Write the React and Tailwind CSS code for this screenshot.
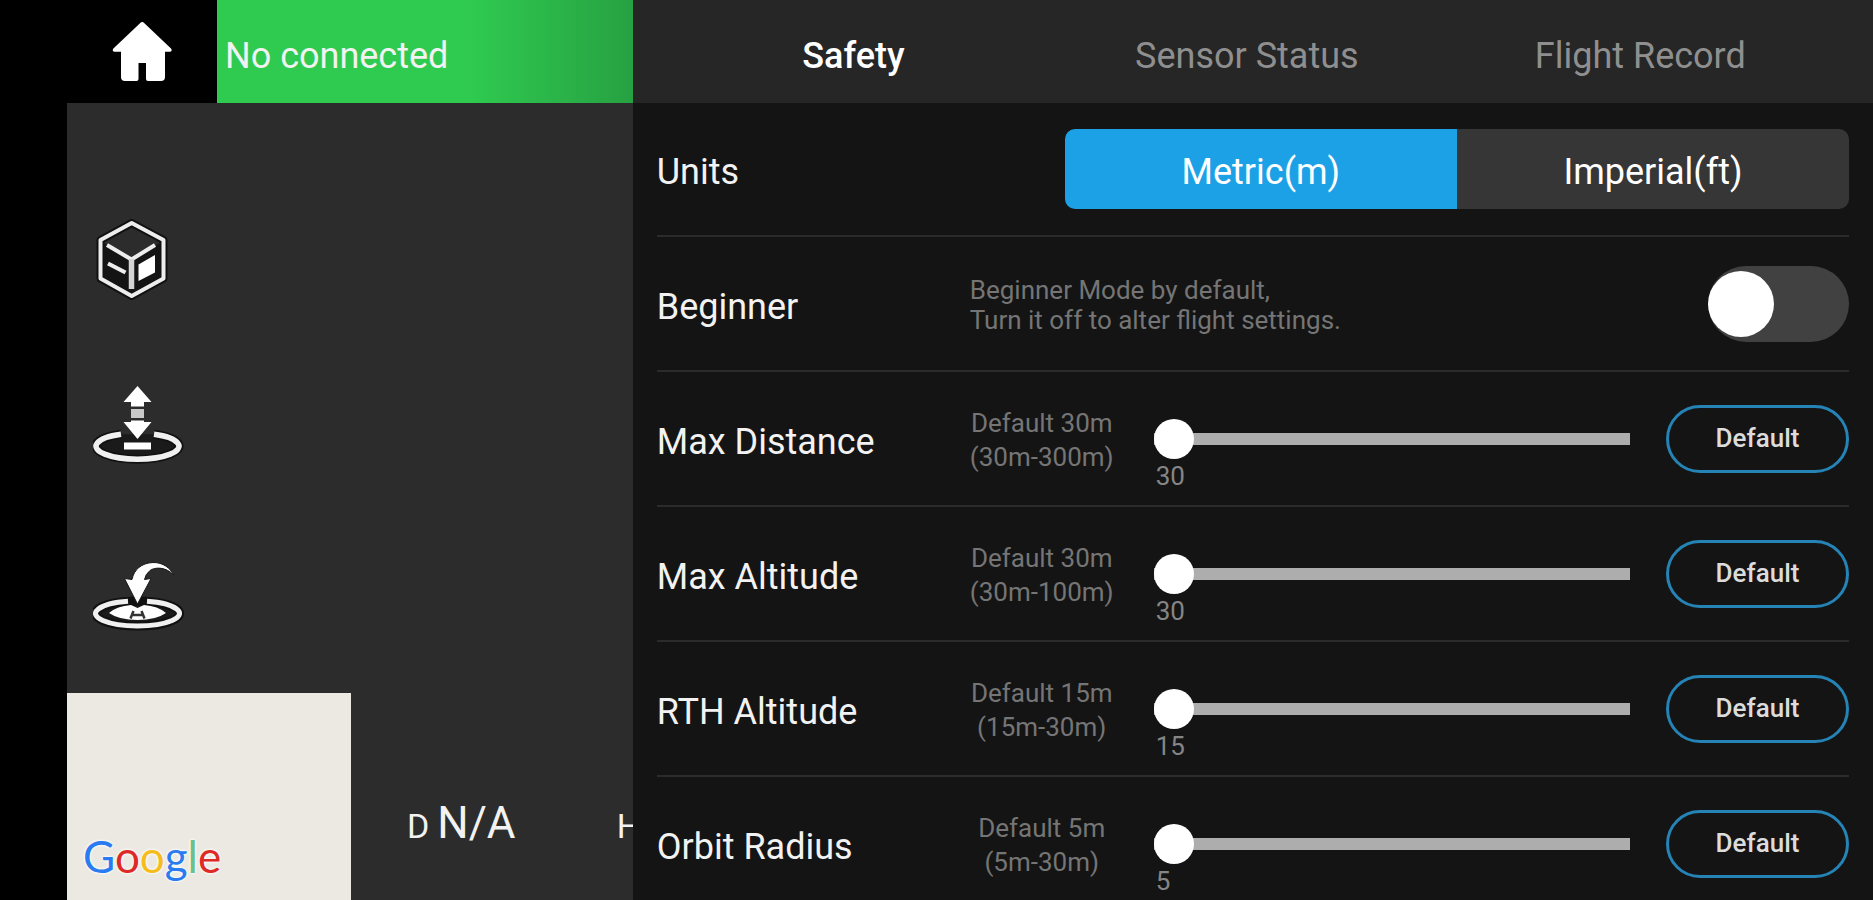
import { useState } from 'react';

const tabs = ['Safety', 'Sensor Status', 'Flight Record'];

const units = [
  { value: 'metric', label: 'Metric(m)' },
  { value: 'imperial', label: 'Imperial(ft)' },
];

const limits = [
  { id: 'max-distance', label: 'Max Distance', min: 30, max: 300 },
  { id: 'max-altitude', label: 'Max Altitude', min: 30, max: 100 },
  { id: 'rth-altitude', label: 'RTH Altitude', min: 15, max: 30 },
  { id: 'orbit-radius', label: 'Orbit Radius', min: 5, max: 30 },
];

const googleLetters = [
  { letter: 'G', className: 'text-[#2b7bf0]' },
  { letter: 'o', className: 'text-[#dd2a26]' },
  { letter: 'o', className: 'text-[#f4bc1c]' },
  { letter: 'g', className: 'text-[#2b7bf0]' },
  { letter: 'l', className: 'text-[#6cc08b]' },
  { letter: 'e', className: 'text-[#dd2a26]' },
];

function HomeIcon() {
  return (
    <svg className="h-[60px] w-[60px]" viewBox="0 0 60 60" fill="#fff" aria-hidden="true">
      <path d="M28 1.200q2.200-2.200 4.400 0L59 26.400q1.800 2.600-1 3.400H53V55q0 4-4 4H36q-2 0-2-2V41h-7.500v16q0 2-2 2H13q-4 0-4-4V29.800H2.400q-2.800-.8-1-3.400z" />
    </svg>
  );
}

function CubeIcon() {
  return (
    <svg className="h-[88px] w-[92px]" viewBox="0 0 92 88" fill="none" stroke="#ededed" strokeWidth="4" strokeLinejoin="round" aria-hidden="true">
      <path d="M38.700 6 70.500 23v38.500L38.700 79 7.500 61.500V23z" stroke="#111" strokeWidth="8" />
      <path d="M11 26 38.500 42.500 67 26V61L38.500 76 11 61z" fill="#141414" stroke="none" />
      <path d="M38.700 6 70.500 23v38.500L38.700 79 7.500 61.500V23z" />
      <path d="M14 28 38.500 42.500 62 28" />
      <path d="M38.500 42v30" strokeWidth="5.500" stroke="#d5d5d5" />
      <path d="M15 46.500l17.500 9" />
      <path d="M45.500 47.500 62 38v17.500l-16.500 8.500z" fill="#fff" stroke="none" />
    </svg>
  );
}

function TakeoffIcon() {
  return (
    <svg className="h-[88px] w-[92px]" viewBox="0 0 92 88" fill="#fff" aria-hidden="true">
      <path d="M61 49.200A41.500 13 0 1 1 28 49.200" fill="#1a1a1a" stroke="#111" strokeWidth="9" />
      <path d="M44.500 1 58.500 17h-7.500v4.500H38V17h-7.500z" />
      <rect x="38" y="24" width="13" height="9" fill="#c9c9c9" />
      <path d="M38 35.500h13V37h7.500l-14 17-14-17H38z" />
      <rect x="31" y="57.500" width="27" height="7" />
      <path d="M61 49.200A41.500 13 0 1 1 28 49.200" fill="none" stroke="#f0f0f0" strokeWidth="5.500" />
    </svg>
  );
}

function ReturnIcon() {
  return (
    <svg className="h-[88px] w-[92px]" viewBox="0 0 92 88" fill="#fff" aria-hidden="true">
      <ellipse cx="44.500" cy="60.500" rx="42" ry="12.500" fill="#1a1a1a" stroke="#111" strokeWidth="9" />
      <path d="M35 48.300A42 12.500 0 1 0 54 48.300" fill="none" stroke="#f0f0f0" strokeWidth="5" />
      <path d="M16 60q8-7 22-8l6.500 3 6.500-3q14 1 22 8-10 7-28.500 7T16 60z" />
      <path d="M37.500 65.500l3-7.500M51.500 65.500l-3-7.500M40 62h9" fill="none" stroke="#333" strokeWidth="2.500" />
      <path d="M81 22C72 13.500 62 14 57 17.500Q52.500 21 51.500 26.500l6.500-1L44.500 51 31.500 25.500l7.500 1C41 16.500 48.500 10 60 9.500c10-.2 17 5.500 21 12.500z" stroke="#1a1a1a" strokeWidth="1" />
    </svg>
  );
}

const flightActions = [
  { label: '3D view', Icon: CubeIcon },
  { label: 'Take off or land', Icon: TakeoffIcon },
  { label: 'Return to home', Icon: ReturnIcon },
];

function LimitRow({ id, label, min, max }) {
  const [value, setValue] = useState(min);

  return (
    <div className="flex h-[135px] items-center border-b-2 border-[#2b2b2b] last:border-transparent">
      <label htmlFor={id} className="w-[313px] shrink-0 pt-1.5 text-[36px]">
        {label}
      </label>
      <p className="w-36 shrink-0 pt-0.5 text-center text-[26px] leading-[34px] whitespace-nowrap text-[#757575]">
        Default {min}m
        <br />({min}m-{max}m)
      </p>
      <div className="ml-10 flex min-w-0 flex-1 flex-col pt-[34px]">
        <input
          id={id}
          type="range"
          min={min}
          max={max}
          value={value}
          onChange={e => setValue(Number(e.target.value))}
          className="h-10 w-full appearance-none bg-transparent [&::-webkit-slider-runnable-track]:h-3 [&::-webkit-slider-runnable-track]:bg-[#adadad] [&::-webkit-slider-thumb]:-mt-3.5 [&::-webkit-slider-thumb]:size-10 [&::-webkit-slider-thumb]:appearance-none [&::-webkit-slider-thumb]:rounded-full [&::-webkit-slider-thumb]:bg-white"
        />
        <output htmlFor={id} className="h-[34px] pl-0.5 text-[26px] leading-[34px] text-[#858585]">
          {value}
        </output>
      </div>
      <button
        type="button"
        onClick={() => setValue(min)}
        className="ml-9 h-[68px] w-[183px] shrink-0 rounded-full border-[3px] border-[#2583b5] text-[26px] font-medium text-[#dcdcdc]"
      >
        Default
      </button>
    </div>
  );
}

export default function App() {
  const [tab, setTab] = useState('Safety');
  const [unit, setUnit] = useState('metric');
  const [beginner, setBeginner] = useState(false);

  return (
    <div className="grid h-screen grid-cols-[26fr_57fr] grid-rows-1 overflow-hidden bg-black pl-[67px] font-[Roboto,sans-serif] text-[#f2f2f2]">
      {/* Flight view behind the settings */}
      <div className="flex min-w-0 flex-col overflow-hidden">
        <header className="flex h-[103px] shrink-0">
          <button type="button" aria-label="Home" className="flex w-[150px] shrink-0 items-center justify-center">
            <HomeIcon />
          </button>
          <p className="flex flex-1 items-center bg-linear-to-r from-[#2fcb50] from-60% to-[#27a142] pt-2 pl-2 text-[36px] whitespace-nowrap">
            No connected
          </p>
        </header>

        <div className="flex min-h-0 flex-1 flex-col bg-[#2c2c2c]">
          <nav className="flex flex-col items-start gap-20 pt-[114px] pl-[26px]">
            {flightActions.map(({ label, Icon }) => (
              <button key={label} type="button" aria-label={label}>
                <Icon />
              </button>
            ))}
          </nav>

          <div className="mt-auto flex items-end">
            <div className="flex h-[207px] w-[284px] shrink-0 items-end bg-[#ebe9e1] pb-4 pl-4">
              <span className="font-[Lato,sans-serif] text-[44px] leading-[56px] [text-shadow:0_0_3px_#fff,0_0_3px_#fff]">
                {googleLetters.map(({ letter, className }, i) => (
                  <span key={i} className={className}>{letter}</span>
                ))}
              </span>
            </div>
            <div className="flex flex-1 items-baseline justify-between overflow-hidden pb-12 pl-14">
              <p className="flex items-baseline gap-2">
                <span className="text-[34px]">D</span>
                <span className="text-[44px] leading-[48px]">N/A</span>
              </p>
              <p className="w-4 text-[34px]">H</p>
            </div>
          </div>
        </div>
      </div>

      {/* Settings panel */}
      <section className="min-w-0 bg-[#141414]">
        <div role="tablist" className="grid h-[103px] grid-cols-3 bg-[#262626] pt-2 pr-9 pl-6">
          {tabs.map(name => (
            <button
              key={name}
              type="button"
              role="tab"
              aria-selected={tab === name}
              onClick={() => setTab(name)}
              className={`text-[36px] ${tab === name ? 'font-medium text-white' : 'text-[#8f8f8f]'}`}
            >
              {name}
            </button>
          ))}
        </div>

        <div className="px-6">
          <fieldset className="flex h-[134px] items-center border-b-2 border-[#2b2b2b]">
            <legend className="float-left w-[408px] pt-1.5 text-[36px]">Units</legend>
            <div className="flex h-20 flex-1 overflow-hidden rounded-[10px]">
              {units.map(({ value, label }) => (
                <label
                  key={value}
                  className={`flex flex-1 cursor-pointer items-center justify-center pt-1.5 text-[36px] text-white ${
                    unit === value ? 'bg-[#1da1e6]' : 'bg-[#363636]'
                  }`}
                >
                  <input
                    type="radio"
                    name="units"
                    value={value}
                    checked={unit === value}
                    onChange={() => setUnit(value)}
                    className="sr-only"
                  />
                  {label}
                </label>
              ))}
            </div>
          </fieldset>

          <div className="flex h-[135px] items-center border-b-2 border-[#2b2b2b]">
            <label htmlFor="beginner" className="w-[313px] shrink-0 pt-1.5 text-[36px]">
              Beginner
            </label>
            <p className="flex-1 pt-0.5 text-[26px] leading-[30px] text-[#757575]">
              Beginner Mode by default,
              <br />
              Turn it off to alter flight settings.
            </p>
            <input
              id="beginner"
              type="checkbox"
              role="switch"
              checked={beginner}
              onChange={e => setBeginner(e.target.checked)}
              className="flex h-[76px] w-[141px] shrink-0 appearance-none items-center rounded-full bg-[#414141] before:size-[66px] before:rounded-full before:bg-white checked:justify-end checked:bg-[#1da1e6]"
            />
          </div>

          {limits.map(limit => (
            <LimitRow key={limit.id} {...limit} />
          ))}
        </div>
      </section>
    </div>
  );
}
